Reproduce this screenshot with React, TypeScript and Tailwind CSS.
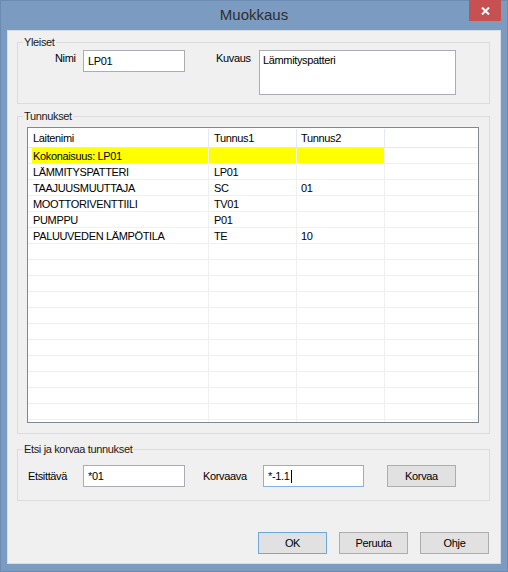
import React from 'react';

const FONT = { fontFamily: '"Liberation Sans", Arial, sans-serif' };

const rows: { name: string; t1: string; t2: string; hl?: boolean }[] = [
  { name: 'Kokonaisuus: LP01', t1: '', t2: '', hl: true },
  { name: 'LÄMMITYSPATTERI', t1: 'LP01', t2: '' },
  { name: 'TAAJUUSMUUTTAJA', t1: 'SC', t2: '01' },
  { name: 'MOOTTORIVENTTIILI', t1: 'TV01', t2: '' },
  { name: 'PUMPPU', t1: 'P01', t2: '' },
  { name: 'PALUUVEDEN LÄMPÖTILA', t1: 'TE', t2: '10' },
];

// fill the list view with empty rows
while (rows.length < 18) rows.push({ name: '', t1: '', t2: '' });

const GroupBox: React.FC<{ title: string; className: string; children: React.ReactNode }> = ({
  title,
  className,
  children,
}) => (
  <div className={`border border-[#dcdcdc] ml-[9px] w-[473px] ${className}`}>
    <div className="-mt-[7px] ml-[5px] px-[1px] w-fit bg-[#f0f0f0] leading-[13px] text-[#1a1a1a]">{title}</div>
    {children}
  </div>
);

const Button: React.FC<{ label: string; isDefault?: boolean; className?: string }> = ({
  label,
  isDefault,
  className = '',
}) => (
  <button
    className={`w-[69px] h-[22px] bg-[#e1e1e1] border ${
      isDefault ? 'border-[#6fa7e0]' : 'border-[#adadad]'
    } text-black leading-[13px] ${className}`}
  >
    {label}
  </button>
);

const App: React.FC = () => {
  return (
    <div
      className="w-[508px] h-[572px] bg-[#7b9bc1] border border-[#6b8bb2] flex flex-col text-[11px] tracking-[-0.35px] text-black"
      style={FONT}
    >
      {/* Title bar */}
      <div className="h-[29px] grid grid-cols-[1fr_auto_1fr] items-start">
        <div />
        <div className="text-[15px] tracking-normal text-[#2e2e2e] leading-[18px] mt-[5px]">Muokkaus</div>
        <div className="flex justify-end pr-[6px] -mt-px">
          <div className="w-[32px] h-[21px] bg-[#c75050] flex items-center justify-center">
            <svg width="9" height="8" viewBox="0 0 9 8">
              <path d="M1 0.5 L8 7.5 M8 0.5 L1 7.5" stroke="white" strokeWidth="2" />
            </svg>
          </div>
        </div>
      </div>

      {/* Client area */}
      <div className="mx-[6px] h-[534px] bg-[#f0f0f0] border border-[#d6dde6] flex flex-col">
        {/* Yleiset */}
        <GroupBox title="Yleiset" className="mt-[11px] h-[62px]">
          <div className="flex items-start pt-[1px] pl-[37px]">
            <span className="w-[28px] leading-[13px] pt-[2px]">Nimi</span>
            <div className="w-[102px] h-[22px] bg-white border border-[#abadb3] pl-[4px] flex items-center">LP01</div>
            <span className="ml-[31px] w-[43px] leading-[13px] pt-[2px]">Kuvaus</span>
            <div className="w-[197px] h-[45px] bg-white border border-[#abadb3] pl-[3px] pt-[3px] leading-[13px]">
              Lämmityspatteri
            </div>
          </div>
        </GroupBox>

        {/* Tunnukset */}
        <GroupBox title="Tunnukset" className="mt-[12px] h-[318px]">
          <div className="ml-[9px] mt-[4px] w-[452px] h-[296px] border border-[#828790] bg-white overflow-hidden">
            <div className="flex h-[20px] border-b border-[#e2e9f2] pt-[1px]">
              <div className="w-[181px] border-r border-[#e2e9f2] pl-[5px] flex items-center">Laitenimi</div>
              <div className="w-[88px] border-r border-[#e2e9f2] pl-[5px] flex items-center">Tunnus1</div>
              <div className="w-[88px] border-r border-[#e2e9f2] pl-[4px] flex items-center">Tunnus2</div>
              <div className="w-[93px]" />
            </div>
            {rows.map((r, i) => (
              <div key={i} className="flex h-[16px] border-b border-[#f0f0f0]">
                <div className="w-[181px] border-r border-[#f0f0f0] pl-[4px]">
                  <div className={`h-full pl-[1px] pt-[1px] flex items-center ${r.hl ? 'bg-[#ffff00]' : ''}`}>
                    {r.name}
                  </div>
                </div>
                <div
                  className={`w-[88px] border-r border-[#f0f0f0] pl-[5px] pt-[1px] flex items-center ${
                    r.hl ? 'bg-[#ffff00]' : ''
                  }`}
                >
                  {r.t1}
                </div>
                <div
                  className={`w-[88px] border-r border-[#f0f0f0] pl-[4px] pt-[1px] flex items-center ${
                    r.hl ? 'bg-[#ffff00]' : ''
                  }`}
                >
                  {r.t2}
                </div>
                <div className="w-[93px]" />
              </div>
            ))}
          </div>
        </GroupBox>

        {/* Etsi ja korvaa */}
        <GroupBox title="Etsi ja korvaa tunnukset" className="mt-[15px] h-[52px]">
          <div className="flex items-center pt-[9px] pl-[10px]">
            <span className="w-[55px]">Etsittävä</span>
            <div className="w-[102px] h-[22px] bg-white border border-[#abadb3] pl-[4px] flex items-center">*01</div>
            <span className="ml-[18px] w-[60px]">Korvaava</span>
            <div className="w-[101px] h-[22px] bg-white border border-[#7eb4ea] pl-[4px] flex items-center">
              *-1.1<span className="inline-block w-px h-[13px] bg-black ml-px" />
            </div>
            <Button label="Korvaa" className="ml-[23px] h-[21px]" />
          </div>
        </GroupBox>

        {/* Dialog buttons */}
        <div className="mt-[31px] flex justify-end gap-[12px] pr-[11px]">
          <Button label="OK" isDefault />
          <Button label="Peruuta" />
          <Button label="Ohje" />
        </div>
      </div>
    </div>
  );
};

export default App;
